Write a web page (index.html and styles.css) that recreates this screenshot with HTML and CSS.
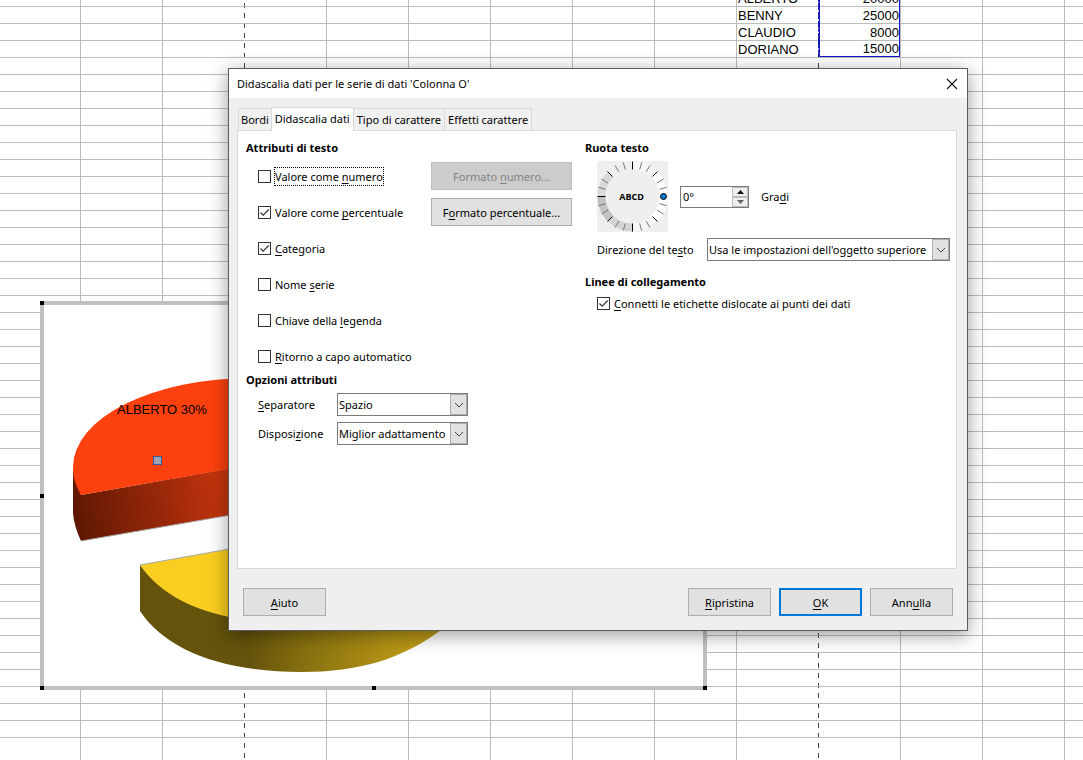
FILE: index.html
```html
<!DOCTYPE html>
<html lang="it">
<head>
<meta charset="utf-8">
<title>Didascalia dati</title>
<link rel="stylesheet" href="styles.css">
</head>
<body>
<main class="sheet">
  <table class="data">
    <tbody>
      <tr><td>ALBERTO</td><td class="num">20000</td></tr>
      <tr><td>BENNY</td><td class="num">25000</td></tr>
      <tr><td>CLAUDIO</td><td class="num">8000</td></tr>
      <tr><td>DORIANO</td><td class="num">15000</td></tr>
    </tbody>
  </table>

  <section class="chart" aria-label="Grafico a torta">
    <svg width="659" height="381" viewBox="44 305 659 381">
      <defs>
        <linearGradient id="redSide" gradientUnits="userSpaceOnUse" x1="73" y1="520" x2="235" y2="490">
          <stop offset="0" stop-color="#5c1703"/><stop offset=".15" stop-color="#6e1c05"/><stop offset=".6" stop-color="#9e290a"/><stop offset="1" stop-color="#cc370e"/>
        </linearGradient>
        <linearGradient id="yellowSide" gradientUnits="userSpaceOnUse" x1="140" y1="0" x2="470" y2="0">
          <stop offset="0" stop-color="#65530c"/><stop offset=".33" stop-color="#65530c"/><stop offset=".5" stop-color="#86700f"/><stop offset=".75" stop-color="#b29115"/><stop offset="1" stop-color="#c8a31a"/>
        </linearGradient>
      </defs>
      <path fill="url(#redSide)" d="M73 467V513Q74 526 81 541L260 510V463L81 495Z"/>
      <path fill="#fc400e" d="M81 495A178 89 0 0 1 73 467A178 89 0 0 1 251 378V465Z"/>
      <path fill="#f9ce20" d="M140 565L302 536V640L165 602Z"/>
      <path fill="url(#yellowSide)" d="M140 565C156 588 183 607 229 617L441 600V630C402 659 359 672 302 672C222 672 166 650 140 611Z"/>
      <path fill="none" stroke="#a8a8a8" stroke-width="1" d="M140 565L302 536M81 541L260 510"/>
      <rect x="153.500" y="456.500" width="8" height="8" fill="#a0a0b4" stroke="#2c5f9e"/>
      <text class="chart-label" x="117" y="414">ALBERTO 30%</text>
    </svg>
    <i class="handle top-left"></i>
    <i class="handle mid-left"></i>
    <i class="handle bottom-left"></i>
    <i class="handle bottom-mid"></i>
    <i class="handle bottom-right"></i>
  </section>

  <form class="dialog" role="dialog" aria-labelledby="dialog-title">
    <header class="titlebar">
      <h1 id="dialog-title">Didascalia dati per le serie di dati 'Colonna O'</h1>
      <button type="button" class="close" aria-label="Chiudi">
        <svg width="12" height="12" viewBox="0 0 12 12"><path d="M1 1L11 11M11 1L1 11" stroke="#111" stroke-width="1.100" fill="none"/></svg>
      </button>
    </header>
    <div class="body">
      <nav class="tabs" role="tablist">
        <button type="button" role="tab" class="tab">Bordi</button>
        <button type="button" role="tab" class="tab active" aria-selected="true">Didascalia dati</button>
        <button type="button" role="tab" class="tab">Tipo di carattere</button>
        <button type="button" role="tab" class="tab">Effetti carattere</button>
      </nav>
      <div class="panel">
        <div class="column">
          <h2>Attributi di testo</h2>
          <div class="attributes">
            <label class="check"><input type="checkbox"><span class="focused">Valore come <u>n</u>umero</span></label>
            <button type="button" class="btn" disabled>Formato <u>n</u>umero...</button>
            <label class="check"><input type="checkbox" checked><span>Valore come <u>p</u>ercentuale</span></label>
            <button type="button" class="btn">F<u>o</u>rmato percentuale...</button>
            <label class="check wide"><input type="checkbox" checked><span><u>C</u>ategoria</span></label>
            <label class="check wide"><input type="checkbox"><span>Nome <u>s</u>erie</span></label>
            <label class="check wide"><input type="checkbox"><span>Chiave della <u>l</u>egenda</span></label>
            <label class="check wide"><input type="checkbox"><span><u>R</u>itorno a capo automatico</span></label>
          </div>
          <h2>Opzioni attributi</h2>
          <div class="options">
            <label for="separator"><u>S</u>eparatore</label>
            <div class="combo">
              <select id="separator"><option>Spazio</option></select>
              <span class="arrow"><svg width="10" height="6" viewBox="0 0 10 6"><path d="M1 1L5 5L9 1" fill="none" stroke="#444"/></svg></span>
            </div>
            <label for="placement">Disposi<u>z</u>ione</label>
            <div class="combo">
              <select id="placement"><option>Miglior adattamento</option></select>
              <span class="arrow"><svg width="10" height="6" viewBox="0 0 10 6"><path d="M1 1L5 5L9 1" fill="none" stroke="#444"/></svg></span>
            </div>
          </div>
        </div>
        <div class="column">
          <h2>Ruota testo</h2>
          <div class="rotation">
            <svg class="dial" width="71" height="71" viewBox="-35.500 -35.500 71 71">
              <rect x="-35.500" y="-35.500" width="71" height="71" fill="#efefef"/>
              <g fill="none" stroke-width="8">
                <path stroke="#fff" d="M22 -22A31.100 31.100 0 0 1 22 22"/>
                <path stroke="#f7f7f7" d="M0 -31A31 31 0 0 1 22 -22M22 22A31 31 0 0 1 0 31"/>
                <path stroke="#d4d4d4" d="M0 31A31 31 0 0 1 -22 22"/>
                <path stroke="#c2c2c2" d="M-22 22A31 31 0 0 1 -31 0"/>
                <path stroke="#d9d9d9" d="M-31 0A31 31 0 0 1 -22 -22"/>
              </g>
              <path stroke="#777" d="M7.200 -27L9.200 -34M13.500 -24.500L17.500 -31M24.500 -13.500L31 -17.500M27 -7.200L34 -9.200M27 7.200L34 9.200M24.500 13.500L31 17.500M13.500 24.500L17.500 31M7.200 27L9.200 34M-7.200 27L-9.200 34M-13.500 24.500L-17.500 31M-24.500 13.500L-31 17.500M-27 7.200L-34 9.200M-27 -7.200L-34 -9.200M-24.500 -13.500L-31 -17.500M-13.500 -24.500L-17.500 -31M-7.200 -27L-9.200 -34"/>
              <path stroke="#000" d="M0 -35V-27M0 27V35M-35 0H-27M20 -20L25 -25M20 20L25 25M-20 20L-25 25M-20 -20L-25 -25"/>
              <circle cx="31" cy="0" r="3" fill="#0f78d0" stroke="#000"/>
              <text class="dial-text" x="-1" y="3" text-anchor="middle">ABCD</text>
            </svg>
            <div class="spin">
              <input id="degrees" type="text" value="0°">
              <span class="steppers">
                <button type="button" aria-label="Aumenta"><svg width="7" height="4" viewBox="0 0 7 4"><path d="M0 4L3.500 0L7 4Z" fill="#111"/></svg></button>
                <button type="button" aria-label="Diminuisci"><svg width="7" height="4" viewBox="0 0 7 4"><path d="M0 0L3.500 4L7 0Z" fill="#666"/></svg></button>
              </span>
            </div>
            <label for="degrees">Gra<u>d</u>i</label>
          </div>
          <div class="direction">
            <label for="direction">Direzione del te<u>s</u>to</label>
            <div class="combo">
              <select id="direction"><option>Usa le impostazioni dell'oggetto superiore</option></select>
              <span class="arrow"><svg width="10" height="6" viewBox="0 0 10 6"><path d="M1 1L5 5L9 1" fill="none" stroke="#444"/></svg></span>
            </div>
          </div>
          <h2 class="spaced">Linee di collegamento</h2>
          <label class="check leader"><input type="checkbox" checked><span><u>C</u>onnetti le etichette dislocate ai punti dei dati</span></label>
        </div>
      </div>
      <footer class="actions">
        <button type="button" class="btn help"><u>A</u>iuto</button>
        <button type="reset" class="btn"><u>R</u>ipristina</button>
        <button type="submit" class="btn primary"><u>O</u>K</button>
        <button type="button" class="btn">Ann<u>u</u>lla</button>
      </footer>
    </div>
  </form>
</main>
</body>
</html>
```
FILE: styles.css
```css
* { box-sizing: border-box; }

body {
  margin: 0;
  background: #fff;
  color: #000;
  font: 11px/16px "Noto Sans", "Open Sans", sans-serif;
}

button, input, select { font: inherit; color: inherit; }
u { text-underline-offset: 2px; text-decoration-skip-ink: none; }

/* Spreadsheet: row lines, two page-break columns, column lines */
.sheet {
  position: relative;
  min-height: 100vh;
  overflow: hidden;
  display: grid;
  grid-template-columns: 81px repeat(13, 82px);
  align-items: start;
  background:
    repeating-linear-gradient(#0000 0 16px, #bcbcbc 16px 17px) 0 -10px,
    repeating-linear-gradient(#fff 0 3px, #444 3px 8px, #fff 8px 10px) 244px 0 / 1px 100% no-repeat,
    repeating-linear-gradient(#fff 0 3px, #444 3px 8px, #fff 8px 10px) 818px 0 / 1px 100% no-repeat,
    repeating-linear-gradient(90deg, #0000 0 81px, #bcbcbc 81px 82px) -1px 0,
    #fff;
}

.data {
  grid-column: 10 / span 2;
  margin-top: -10px;
  table-layout: fixed;
  width: 163px;
  border-collapse: separate;
  border-spacing: 0;
  font: 13px/17px "Liberation Sans", Arial, sans-serif;
}
.data td { width: 82px; height: 17px; padding: 0 0 0 1px; border-right: 1px dashed #1414c8; }
.data .num { width: 81px; border-left: 1px solid #1414c8; border-right: 1px solid #1414c8; padding: 0; text-align: right; }
.data tr:last-child td { height: 16px; line-height: 15px; }
.data tr:last-child .num { border-bottom: 1px solid #1414c8; }

/* Chart object */
.chart {
  position: absolute;
  left: 40px;
  top: 301px;
  border: 4px solid #c0c0c0;
  background: #fff;
}
.chart svg { display: block; }
.chart-label { font: 13px "Liberation Sans", Arial, sans-serif; }
.handle { position: absolute; width: 4px; height: 4px; background: #000; }
.top-left { left: -4px; top: -4px; }
.mid-left { left: -4px; top: calc(50% - 2px); }
.bottom-left { left: -4px; bottom: -4px; }
.bottom-mid { left: calc(50% - 2px); bottom: -4px; }
.bottom-right { right: -4px; bottom: -4px; }

/* Dialog window */
.dialog {
  position: absolute;
  left: 228px;
  top: 68px;
  width: 740px;
  border: 1px solid #5c5c5c;
  background: #efefef;
  box-shadow: 0 4px 18px rgba(0, 0, 0, .4);
}
.titlebar {
  display: flex;
  align-items: center;
  justify-content: space-between;
  height: 29px;
  padding: 0 8px;
  background: #fff;
}
h1, h2 { margin: 0; font-size: 11px; line-height: 16px; }
h1 { font-weight: 400; }
.close { display: flex; padding: 1px; border: 0; background: none; }
.body { padding: 9px 10px 14px 8px; }

.tabs { display: flex; align-items: flex-end; padding-left: 1px; }
.tab {
  height: 22px;
  padding: 1px 3px 0;
  border: 1px solid #d9d9d9;
  border-width: 1px 1px 0 0;
  background: #f0f0f0;
}
.tab:first-child { border-left-width: 1px; padding: 1px 2px 0; }
.tab.active { height: 24px; margin-bottom: -1px; padding-bottom: 2px; background: #fff; position: relative; }

.panel {
  display: grid;
  grid-template-columns: 339px 1fr;
  min-height: 439px;
  padding: 9px 6px 9px 8px;
  border: 1px solid #d9d9d9;
  background: #fff;
}
.attributes {
  display: grid;
  grid-template-columns: 1fr 141px;
  grid-auto-rows: 28px;
  gap: 8px;
  margin: 6px 13px 2px 12px;
}
.wide { grid-column: 1 / -1; }
.check { display: flex; align-items: center; gap: 3px; }
.check span { padding: 2px 1px 0; line-height: 18px; }
.check .focused { padding: 1px 0 0; border: 1px dotted #000; line-height: 16px; }
.check input {
  appearance: none;
  flex: none;
  width: 13px;
  height: 13px;
  margin: 0;
  border: 1px solid #333;
  background: #fff;
}
.check input:checked {
  background: #fff url("data:image/svg+xml,%3Csvg xmlns='http://www.w3.org/2000/svg' viewBox='0 0 11 11'%3E%3Cpath d='M1.500 5.500L4.200 8.200L9.700 2.500' fill='none' stroke='%23333' stroke-width='1.200'/%3E%3C/svg%3E");
}

.btn {
  height: 28px;
  padding: 1px 0 0;
  border: 1px solid #adadad;
  background: #e1e1e1;
}
.btn:disabled { border-color: #bfbfbf; background: #ccc; color: #838383; }

.options {
  display: grid;
  grid-template-columns: 79px 131px;
  align-items: center;
  gap: 6px 0;
  margin: 5px 0 0 12px;
}
.combo { position: relative; display: flex; }
.combo select {
  appearance: none;
  flex: 1;
  min-width: 0;
  height: 23px;
  padding: 0 18px 0 1px;
  border: 1px solid #7a7a7a;
  border-radius: 0;
  background: #fff;
}
.combo .arrow {
  position: absolute;
  top: 1px;
  right: 1px;
  bottom: 1px;
  width: 17px;
  display: flex;
  align-items: center;
  justify-content: center;
  border: 1px solid #adadad;
  background: #e1e1e1;
  pointer-events: none;
}

.rotation { display: flex; align-items: center; gap: 12px; margin: 5px 0 6px 12px; }
.dial-text { font: 700 9px "Open Sans", "Noto Sans", sans-serif; }
.spin { display: flex; width: 69px; height: 22px; border: 1px solid #7a7a7a; background: #fff; }
.spin input { flex: 1; min-width: 0; padding: 0 2px; border: 0; background: none; }
.steppers { display: flex; flex-direction: column; width: 16px; }
.steppers button {
  flex: 1;
  display: flex;
  align-items: center;
  justify-content: center;
  padding: 0;
  border: 1px solid #bdbdbd;
  background: #eee;
}
.direction { display: flex; align-items: center; justify-content: space-between; margin-left: 12px; }
.direction .combo { width: 243px; }
.spaced { margin-top: 13px; }
.leader { margin: 3px 0 0 12px; }

.actions { display: flex; gap: 8px; padding: 19px 4px 0 6px; }
.actions .btn { width: 83px; }
.actions .help { margin-right: auto; }
.actions .primary { border: 2px solid #0078d7; }
```
